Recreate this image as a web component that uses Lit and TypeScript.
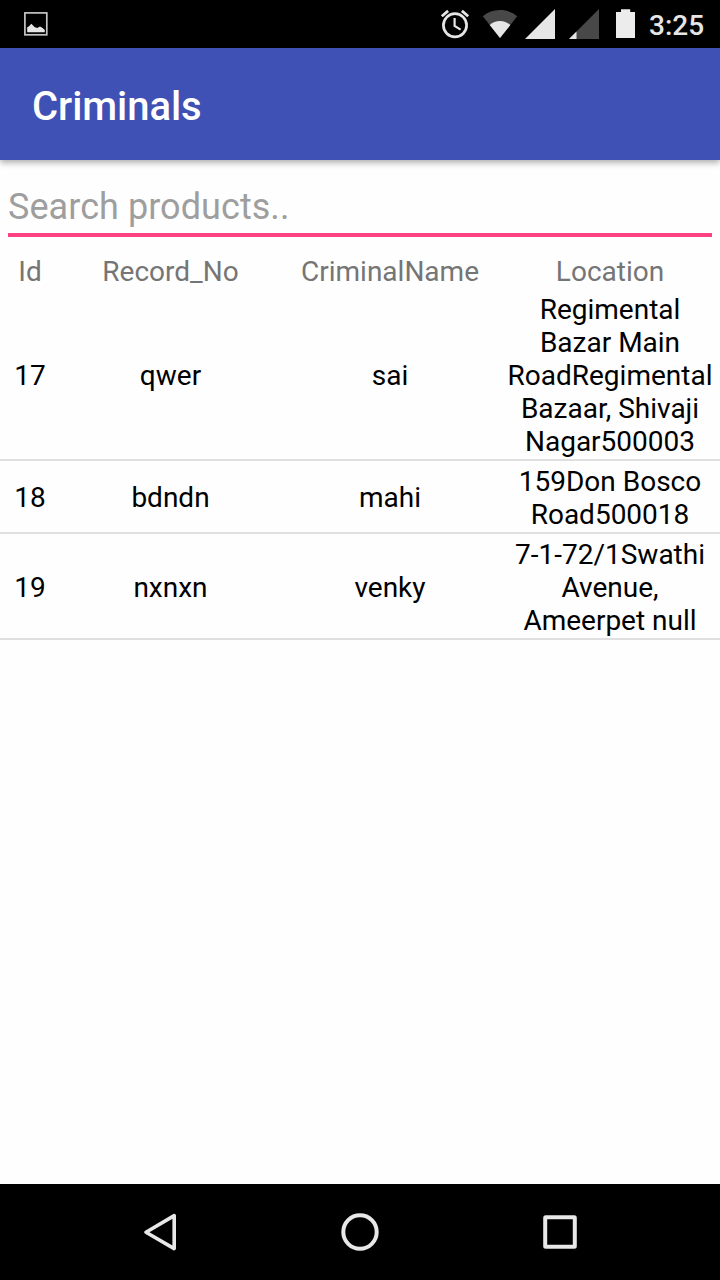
import { LitElement, html, css } from "lit";
import { customElement } from "lit/decorators.js";

interface Criminal {
  id: string;
  record: string;
  name: string;
  location: string[];
}

const CRIMINALS: Criminal[] = [
  {
    id: "17",
    record: "qwer",
    name: "sai",
    location: ["Regimental", "Bazar Main", "RoadRegimental", "Bazaar, Shivaji", "Nagar500003"],
  },
  { id: "18", record: "bdndn", name: "mahi", location: ["159Don Bosco", "Road500018"] },
  { id: "19", record: "nxnxn", name: "venky", location: ["7-1-72/1Swathi", "Avenue,", "Ameerpet null"] },
];

@customElement("status-bar")
class StatusBar extends LitElement {
  static styles = css`
    :host {
      display: flex;
      justify-content: space-between;
      height: 48px;
      background: #000;
      color: #e6e6e6;
    }
    svg {
      display: block;
      flex: none;
    }
    .left {
      padding-left: 16px;
    }
    .right {
      display: flex;
      padding-right: 16px;
    }
    .clock {
      font: 500 28px/33px Roboto, sans-serif;
      padding-top: 9px;
      width: 55px;
      white-space: nowrap;
    }
  `;

  render() {
    return html`
      <div class="left">
        <svg width="40" height="48" viewBox="16 0 40 48">
          <rect x="24.9" y="12.9" width="21.9" height="21.9" fill="none" stroke="#c4c4c4" stroke-width="1.7" />
          <path d="M27.2 32.2V27.2l1.6-.7L31.4 23.8l3.1 3.2 2.7 1L40 26.6l2.6 1.3 2.2 2.2v2.1z" fill="#e6e6e6" />
        </svg>
      </div>
      <div class="right">
        <svg width="209" height="48" viewBox="440 0 209 48">
          <g fill="none" stroke="#e6e6e6">
            <circle cx="455" cy="25.3" r="11.6" stroke-width="2.7" />
            <path d="M454.6 18v7.9l6 3.7" stroke-width="2.2" />
            <path d="M441.8 16.2l6.3-5.3M468.2 16.2l-6.3-5.3" stroke-width="2.8" />
          </g>
          <path d="M500 38L482.8 16.3C487.7 12.2 493.7 10 500 10s12.3 2.2 17.2 6.3z" fill="#484848" />
          <path d="M500 38L489.7 25C492.6 22.4 496 21 500 21s7.4 1.4 10.3 4z" fill="#e6e6e6" />
          <path d="M525 39h30V9z" fill="#e6e6e6" />
          <path d="M569 39h30V9z" fill="#484848" />
          <path d="M569 39h7.5v-7.5z" fill="#e6e6e6" />
          <path d="M616 12h5V9.2h9.2V12h4.8v26h-19z" fill="#ececec" />
        </svg>
        <span class="clock">3:25</span>
      </div>
    `;
  }
}

@customElement("nav-bar")
class NavBar extends LitElement {
  static styles = css`
    :host {
      display: grid;
      grid-template-columns: repeat(3, 200px);
      justify-content: center;
      align-items: center;
      justify-items: center;
      height: 96px;
      background: #000;
    }
    svg {
      display: block;
      fill: none;
      stroke: #e8e8e8;
      stroke-width: 4;
      stroke-linejoin: round;
    }
  `;

  render() {
    return html`
      <svg width="48" height="48"><path d="M10 24.200L38.200 7.600v33z" stroke-width="3.600" /></svg>
      <svg width="48" height="48"><circle cx="24" cy="24" r="16.700" /></svg>
      <svg width="48" height="48"><rect x="9.200" y="9.200" width="29.600" height="29.600" rx=".5" /></svg>
    `;
  }
}

@customElement("app-root")
class AppRoot extends LitElement {
  static styles = css`
    :host {
      display: flex;
      flex-direction: column;
      width: 720px;
      height: 1280px;
      overflow: hidden;
      background: #fefefe;
      font: 28px/33px Roboto, sans-serif;
    }
    .toolbar {
      display: flex;
      align-items: center;
      height: 112px;
      padding: 6px 32px 0;
      box-sizing: border-box;
      background: #3f51b5;
      color: #fff;
      font-size: 40px;
      line-height: 48px;
      font-weight: 500;
      letter-spacing: -0.06px;
      box-shadow: 0 3px 6px rgba(0, 0, 0, 0.3);
    }
    .content {
      flex: 1;
      padding-top: 24px;
    }
    .search {
      margin: 0 8px 18px;
      height: 49px;
      border-bottom: 4px solid #ff4081;
      color: #9e9e9e;
      font-size: 36px;
      line-height: 46px;
      letter-spacing: 0.06px;
    }
    .columns {
      display: grid;
      grid-template-columns: 60px repeat(3, 220px);
      align-items: center;
      text-align: center;
      white-space: nowrap;
    }
    .columns > span {
      padding-bottom: 0.6px;
    }
    .columns > span:nth-child(2) {
      padding-left: 1px;
    }
    .head {
      height: 34px;
      align-items: start;
      color: #757575;
    }
    .row {
      color: #000;
      padding: 4px 0 1px;
      border-bottom: 2px solid #dfdfdf;
    }
  `;

  render() {
    return html`
      <status-bar></status-bar>
      <header class="toolbar">Criminals</header>
      <main class="content">
        <div class="search">Search products..</div>
        <div class="columns head">
          <span>Id</span><span>Record_No</span><span>CriminalName</span><span>Location</span>
        </div>
        ${CRIMINALS.map(
          (c) => html`
            <div class="columns row">
              <span>${c.id}</span><span>${c.record}</span><span>${c.name}</span>
              <div>${c.location.map((line) => html`<div>${line}</div>`)}</div>
            </div>
          `
        )}
      </main>
      <nav-bar></nav-bar>
    `;
  }
}
